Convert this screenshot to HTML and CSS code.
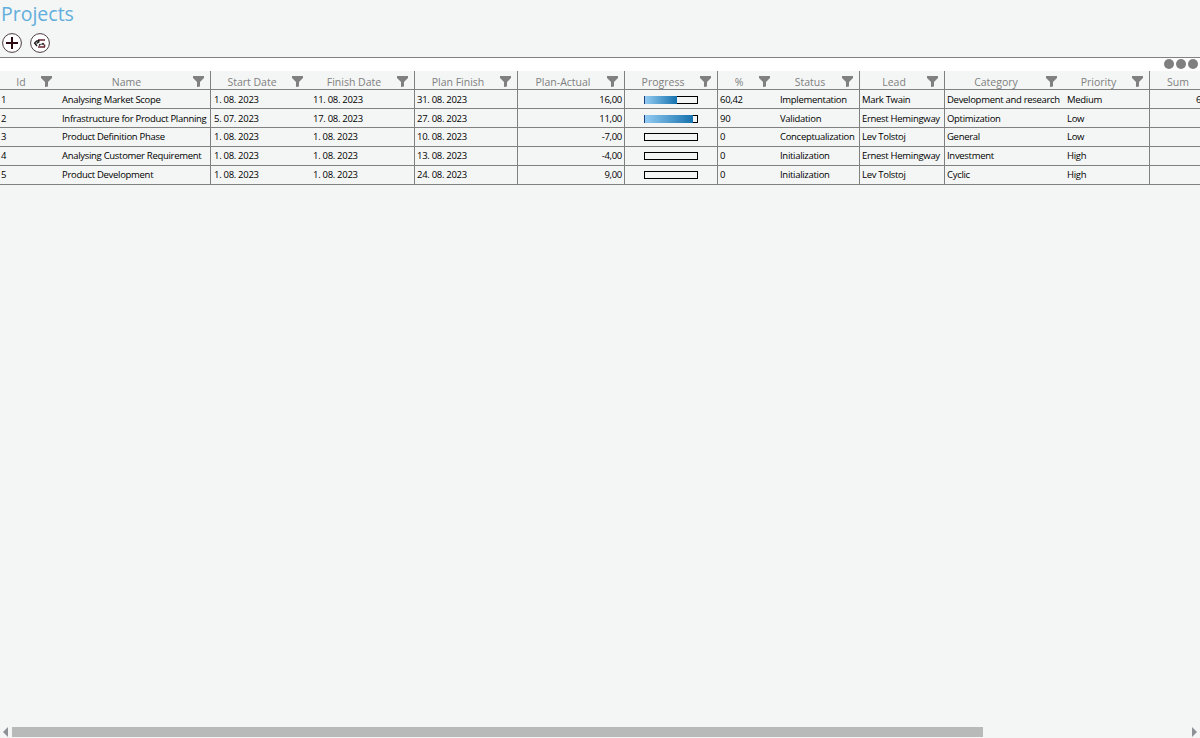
FILE: index.html
```
<!DOCTYPE html>
<html>
	<head>
		<meta charset="utf-8" />
		<title>Projects</title>
		<link rel="stylesheet" href="styles.css">
	</head>
	<body>
		<svg class="defs">
			<symbol id="funnel" viewBox="0 0 11 11"><path d="M0 0h11v2L7 6v4.500L4 11V6L0 2z" /></symbol>
		</svg>
		<div class="layout">
			<div class="toolbar">
				<h1>Projects</h1>
				<div class="buttons">
					<button type="button" title="Add">
						<svg viewBox="0 0 20 20"><circle cx="10" cy="10" r="9.4" /><path class="plus" d="M10 4v12M4 10h12" /></svg>
					</button>
					<button type="button" title="Show">
						<svg viewBox="0 0 20 20"><circle cx="10" cy="10" r="9.4" /><path class="frame" d="M8 7h7M8 14h7M14.5 11.500v2.500" /><path class="eye" d="M9.500 7.500C7 7.500 5.500 8.500 4.500 10l2.500 3M6.500 10.500l3-2M9 12.500l1.500-1.500M11.500 11.500l1.500-1 1 1" /></svg>
					</button>
				</div>
			</div>
			<div class="menu"><i></i><i></i><i></i></div>
			<div class="grid">
				<table>
					<colgroup>
						<col class="c-id"><col class="c-name"><col class="c-start"><col class="c-finish"><col class="c-plan"><col class="c-diff"><col class="c-progress"><col class="c-pct"><col class="c-status"><col class="c-lead"><col class="c-category"><col class="c-priority"><col class="c-sum">
					</colgroup>
					<thead>
						<tr>
							<th><div><span>Id</span><svg><use href="#funnel" /></svg></div></th>
							<th class="line"><div><span>Name</span><svg><use href="#funnel" /></svg></div></th>
							<th><div><span>Start Date</span><svg><use href="#funnel" /></svg></div></th>
							<th class="line"><div><span>Finish Date</span><svg><use href="#funnel" /></svg></div></th>
							<th class="line"><div><span>Plan Finish</span><svg><use href="#funnel" /></svg></div></th>
							<th class="line"><div><span>Plan-Actual</span><svg><use href="#funnel" /></svg></div></th>
							<th class="line"><div><span>Progress</span><svg><use href="#funnel" /></svg></div></th>
							<th><div><span>%</span><svg><use href="#funnel" /></svg></div></th>
							<th class="line"><div><span>Status</span><svg><use href="#funnel" /></svg></div></th>
							<th class="line"><div><span>Lead</span><svg><use href="#funnel" /></svg></div></th>
							<th><div><span>Category</span><svg><use href="#funnel" /></svg></div></th>
							<th class="line"><div><span>Priority</span><svg><use href="#funnel" /></svg></div></th>
							<th><div><span>Sum</span><svg><use href="#funnel" /></svg></div></th>
						</tr>
					</thead>
					<tbody>
						<tr>
							<td class="id">1</td><td class="line">Analysing Market Scope</td><td>1. 08. 2023</td><td class="line">11. 08. 2023</td><td class="line">31. 08. 2023</td><td class="line num">16,00</td>
							<td class="line"><div class="bar"><div style="width: 60.42%"></div></div></td>
							<td>60,42</td><td class="line">Implementation</td><td class="line">Mark Twain</td><td>Development and research</td><td class="line">Medium</td><td class="sum">6</td>
						</tr>
						<tr>
							<td class="id">2</td><td class="line">Infrastructure for Product Planning</td><td>5. 07. 2023</td><td class="line">17. 08. 2023</td><td class="line">27. 08. 2023</td><td class="line num">11,00</td>
							<td class="line"><div class="bar"><div style="width: 90%"></div></div></td>
							<td>90</td><td class="line">Validation</td><td class="line">Ernest Hemingway</td><td>Optimization</td><td class="line">Low</td><td></td>
						</tr>
						<tr>
							<td class="id">3</td><td class="line">Product Definition Phase</td><td>1. 08. 2023</td><td class="line">1. 08. 2023</td><td class="line">10. 08. 2023</td><td class="line num">-7,00</td>
							<td class="line"><div class="bar"></div></td>
							<td>0</td><td class="line">Conceptualization</td><td class="line">Lev Tolstoj</td><td>General</td><td class="line">Low</td><td></td>
						</tr>
						<tr>
							<td class="id">4</td><td class="line">Analysing Customer Requirement</td><td>1. 08. 2023</td><td class="line">1. 08. 2023</td><td class="line">13. 08. 2023</td><td class="line num">-4,00</td>
							<td class="line"><div class="bar"></div></td>
							<td>0</td><td class="line">Initialization</td><td class="line">Ernest Hemingway</td><td>Investment</td><td class="line">High</td><td></td>
						</tr>
						<tr>
							<td class="id">5</td><td class="line">Product Development</td><td>1. 08. 2023</td><td class="line">1. 08. 2023</td><td class="line">24. 08. 2023</td><td class="line num">9,00</td>
							<td class="line"><div class="bar"></div></td>
							<td>0</td><td class="line">Initialization</td><td class="line">Lev Tolstoj</td><td>Cyclic</td><td class="line">High</td><td></td>
						</tr>
					</tbody>
				</table>
			</div>
			<div class="scrollbar">
				<svg viewBox="0 0 5 10"><path d="M5 0v10L0 5z" /></svg>
				<div class="track"><div class="thumb"></div></div>
				<svg viewBox="0 0 5 10"><path d="M0 0v10l5-5z" /></svg>
			</div>
		</div>
	</body>
</html>
```
FILE: styles.css
```
* { box-sizing: border-box; }
body { margin: 0; background-color: #f4f6f5; font-family: "Open Sans", "Noto Sans", sans-serif; font-size: 9.5px; color: #000000; overflow: hidden; }
.defs { display: none; }
.layout { display: flex; flex-direction: column; width: 1200px; height: 738px; overflow: hidden; }

.toolbar { height: 58px; border-bottom: 1px solid #808080; }
h1 { margin: 0; padding-left: 1px; height: 33px; line-height: 28px; font-size: 19.5px; font-weight: normal; color: #62aedd; }
.buttons { display: flex; gap: 8px; padding-left: 2px; }
button { width: 20px; height: 20px; padding: 0; border: none; background: none; }
button svg { display: block; width: 20px; height: 20px; fill: none; }
button circle { fill: #ffffff; stroke: #4a3c42; stroke-width: 1; }
.plus { stroke: #2b0a12; stroke-width: 2; }
.frame { stroke: #6a2430; stroke-width: 1.5; }
.eye { stroke: #101010; stroke-width: 1.3; }

.menu { display: flex; justify-content: flex-end; gap: 2px; height: 13px; padding: 1px 2px 0 0; background-color: #ffffff; }
.menu i { width: 10px; height: 10px; border-radius: 5px; background-color: #808080; }

.grid { flex: 1; overflow: hidden; }
table { table-layout: fixed; width: 1223px; border-spacing: 0; }
.c-id { width: 59px; }
.c-name { width: 152px; }
.c-start { width: 99px; }
.c-finish { width: 105px; }
.c-plan { width: 103px; }
.c-diff { width: 107px; }
.c-progress { width: 93px; }
.c-pct { width: 59px; }
.c-status { width: 83px; }
.c-lead { width: 85px; }
.c-category { width: 119px; }
.c-priority { width: 86px; }
.c-sum { width: 73px; }
th, td { height: 19px; padding: 2px 0 0 3px; border-bottom: 1px solid #808080; line-height: 16px; text-align: left; white-space: nowrap; overflow: hidden; }
td { letter-spacing: -0.3px; }
tr:nth-child(n+3) td { padding-top: 0; }
.line + td:nth-child(n+5) { padding-left: 2px; }
th { padding: 0; font-size: 10.5px; font-weight: normal; color: #808080; }
th div { display: flex; align-items: center; height: 18px; padding-right: 7px; }
th.line div { padding-right: 6px; }
th span { flex: 1; padding: 3px 0 0 1px; text-align: center; }
th svg { width: 11px; height: 11px; margin-top: 3px; fill: #808080; }
.line { border-right: 1px solid #808080; }
.id { padding-left: 1px; }
.num { padding-right: 2px; text-align: right; }
td.sum:nth-child(n+5) { padding-left: 46px; }
.bar { width: 54px; height: 8px; margin-left: 17px; box-shadow: inset 0 0 0 1px #000000; }
.bar div { height: 8px; border-left: 1px solid #1c3f7d; background: linear-gradient(to right, #92cbf2, #1672ae); }

.scrollbar { display: flex; align-items: center; height: 12px; padding: 0 3px; }
.scrollbar svg { width: 5px; height: 10px; fill: #8e9297; }
.track { flex: 1; padding: 0 4px; }
.thumb { width: 971px; height: 10px; background-color: #b8bab9; }
```
